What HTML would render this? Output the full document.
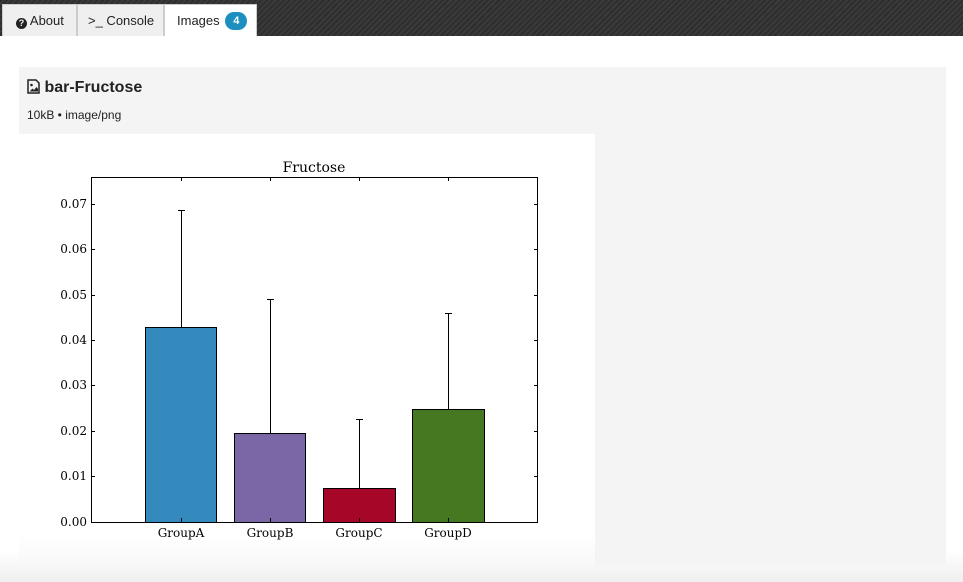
<!DOCTYPE html>
<html><head><meta charset="utf-8"><style>
*{margin:0;padding:0;box-sizing:border-box}
body{width:963px;height:582px;overflow:hidden;position:relative;background:linear-gradient(#fff 0,#fff 550px,#efefef 582px);font-family:"Liberation Sans",sans-serif}
.top{position:absolute;left:0;top:0;width:963px;height:36px;background:repeating-linear-gradient(135deg,#2e2e2e 0 2px,#3a3a3a 2px 4px)}
.tab{position:absolute;top:4px;height:32px;background:#efefef;border:1px solid #ccc;border-bottom:none;font-size:13px;color:#222;line-height:32px;padding-left:13px}
.panel{position:absolute;left:19px;top:67px;width:927px;height:498px;background:#f4f4f4}
.img{position:absolute;left:19px;top:134px;width:576px;height:431px;background:linear-gradient(#fff 0,#fff 400px,#f8f8f8 431px)}
</style></head><body>
<div class="top"></div>
<div class="tab" style="left:2px;width:75px">
<span style="display:inline-block;width:11px;height:11px;border-radius:50%;background:#222;color:#efefef;font-size:9px;font-weight:bold;line-height:11px;text-align:center;vertical-align:-1px">?</span> About</div>
<div class="tab" style="left:77px;width:87px;padding-left:10px">&gt;_ Console</div>
<div class="tab" style="left:164px;width:93px;background:#fff;padding-left:12px">Images <span style="display:inline-block;width:22px;height:18px;border-radius:9px;background:#1c8fc0;color:#fff;font-size:11px;font-weight:bold;text-align:center;line-height:18px;vertical-align:1px;margin-left:2px">4</span></div>
<div class="panel">
<div style="position:absolute;left:8px;top:12px;font-size:16px;font-weight:bold;color:#222">
<svg width="13" height="15" viewBox="0 0 13 15" style="vertical-align:-2px"><path d="M1 1h8l3 3v10H1z" fill="none" stroke="#222" stroke-width="1.5"/><circle cx="4.5" cy="6" r="1.3" fill="#222"/><path d="M2.5 12.5l3-3 1.5 1.5 2.5-3 1.5 2v2.5z" fill="#222"/></svg> bar-Fructose</div>
<div style="position:absolute;left:8px;top:41px;font-size:12px;color:#222">10kB • image/png</div>
</div>
<div class="img"></div>
<svg style="position:absolute;left:0;top:0" width="963" height="582" font-family="DejaVu Serif, serif">
<text x="314" y="172" font-size="14" text-anchor="middle">Fructose</text>
<g stroke="#000" stroke-width="1">
<rect x="145.5" y="327.5" width="71" height="195" fill="#348abd"/>
<rect x="234.5" y="433.5" width="71" height="89" fill="#7a68a6"/>
<rect x="323.5" y="488.5" width="72" height="34" fill="#a60628"/>
<rect x="412.5" y="409.5" width="72" height="113" fill="#467821"/>
<path d="M181.5 210v117M178 210.5h7M270.5 299v134M267 299.5h7M359.5 419v69M356 419.5h7M448.5 313v96M445 313.5h7"/>
<rect x="91.5" y="177.5" width="446" height="345" fill="none"/>
<path d="M181.5 177v4M270.5 177v4M359.5 177v4M448.5 177v4M181.5 522v-4M270.5 522v-4M359.5 522v-4M448.5 522v-4"/>
<path d="M91 204.5h4M91 249.5h4M91 295.5h4M91 340.5h4M91 385.5h4M91 431.5h4M91 476.5h4M538 204.5h-4M538 249.5h-4M538 295.5h-4M538 340.5h-4M538 385.5h-4M538 431.5h-4M538 476.5h-4"/>
</g>
<g font-size="12" text-anchor="end">
<text x="87" y="208">0.07</text><text x="87" y="253">0.06</text><text x="87" y="299">0.05</text><text x="87" y="344">0.04</text><text x="87" y="389">0.03</text><text x="87" y="435">0.02</text><text x="87" y="480">0.01</text><text x="87" y="526">0.00</text>
</g>
<g font-size="12" text-anchor="middle">
<text x="181" y="537">GroupA</text><text x="270" y="537">GroupB</text><text x="359" y="537">GroupC</text><text x="448" y="537">GroupD</text>
</g>
</svg>
</body></html>
